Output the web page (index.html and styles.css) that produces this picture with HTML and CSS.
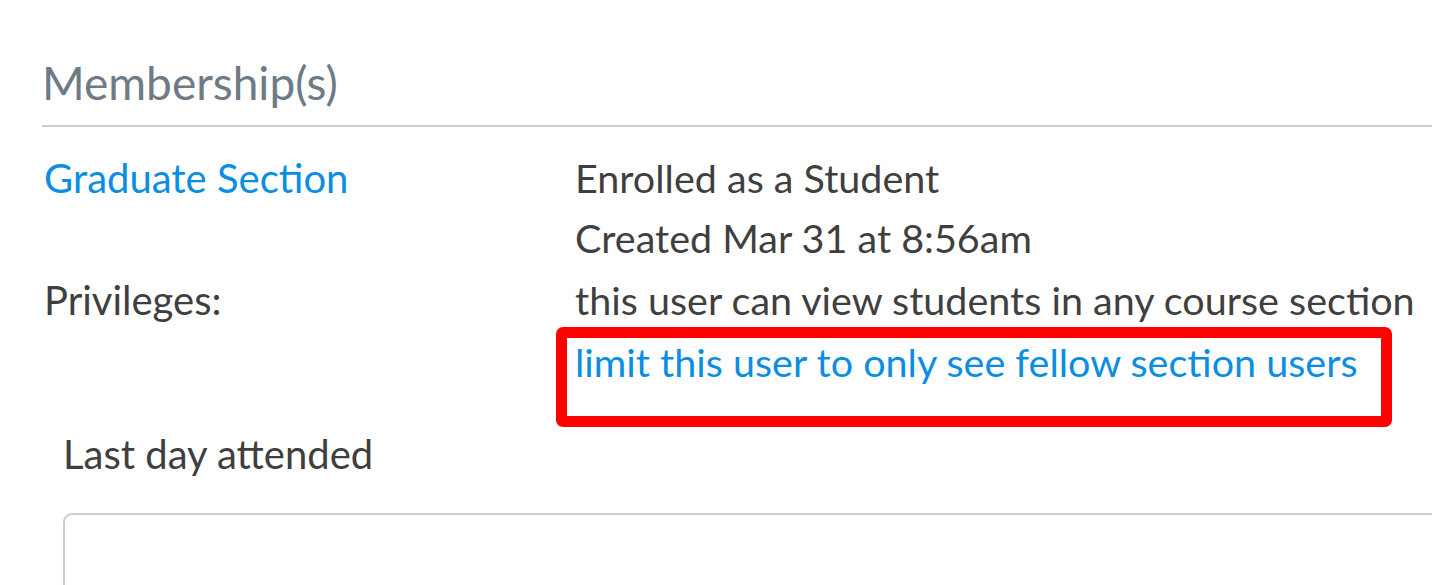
FILE: index.html
```html
<!DOCTYPE html>
<html lang="en">
<head>
<meta charset="utf-8">
<title>Membership(s)</title>
<link rel="stylesheet" href="styles.css">
</head>
<body>
<div class="page">
  <h2 class="section-title">Membership(s)</h2>
  <div class="membership">
    <div class="cell cell-label"><a class="link" href="#">Graduate Section</a></div>
    <div class="cell cell-value">
      <div>Enrolled as a Student</div>
      <div>Created Mar 31 at 8:56am</div>
    </div>
    <div class="cell cell-label row2">Privileges:</div>
    <div class="cell cell-value row2">
      <div>this user can view students in any course section</div>
      <div class="limit-line">
        <a class="link" href="#">limit this user to only see fellow section users</a>
        <div class="highlight"></div>
      </div>
    </div>
  </div>
  <div class="form-section">
    <label class="field-label">Last day attended</label>
    <div class="text-input"></div>
  </div>
</div>
</body>
</html>
```

FILE: styles.css
```css
html, body {
  margin: 0;
  padding: 0;
  background: #ffffff;
}

body {
  font-family: Lato, "Noto Sans", "Liberation Sans", sans-serif;
  color: #3f3f3f;
  overflow: hidden;
}

.page {
  padding-left: 42px;
}

.section-title {
  margin: 0;
  padding-top: 55px;
  font-size: 46px;
  font-weight: 400;
  line-height: 1.2;
  color: #6e7a85;
  padding-bottom: 15px;
  border-bottom: 2px solid #c7cdd1;
}

.membership {
  display: grid;
  grid-template-columns: 531px 1fr;
  padding-left: 2px;
  padding-top: 21px;
  font-size: 40px;
  line-height: 60px;
}

.cell-value {
  font-size: 39.5px;
}

.row2 {
  padding-top: 2px;
}

.link {
  color: #0b8ee2;
  text-decoration: none;
}

.limit-line {
  position: relative;
  margin-top: 2px;
}

.highlight {
  position: absolute;
  top: -5px;
  left: -19px;
  width: 836px;
  height: 100px;
  box-sizing: border-box;
  border: 11px solid #ff0000;
  border-radius: 7px;
  pointer-events: none;
}

.form-section {
  padding-left: 21px;
  padding-top: 32px;
}

.field-label {
  display: block;
  font-size: 40px;
  line-height: 60px;
  color: #3f3f3f;
}

.text-input {
  margin-top: 29px;
  height: 120px;
  box-sizing: border-box;
  border: 2px solid #c7cdd1;
  border-radius: 9px;
  margin-right: -40px;
}
```
